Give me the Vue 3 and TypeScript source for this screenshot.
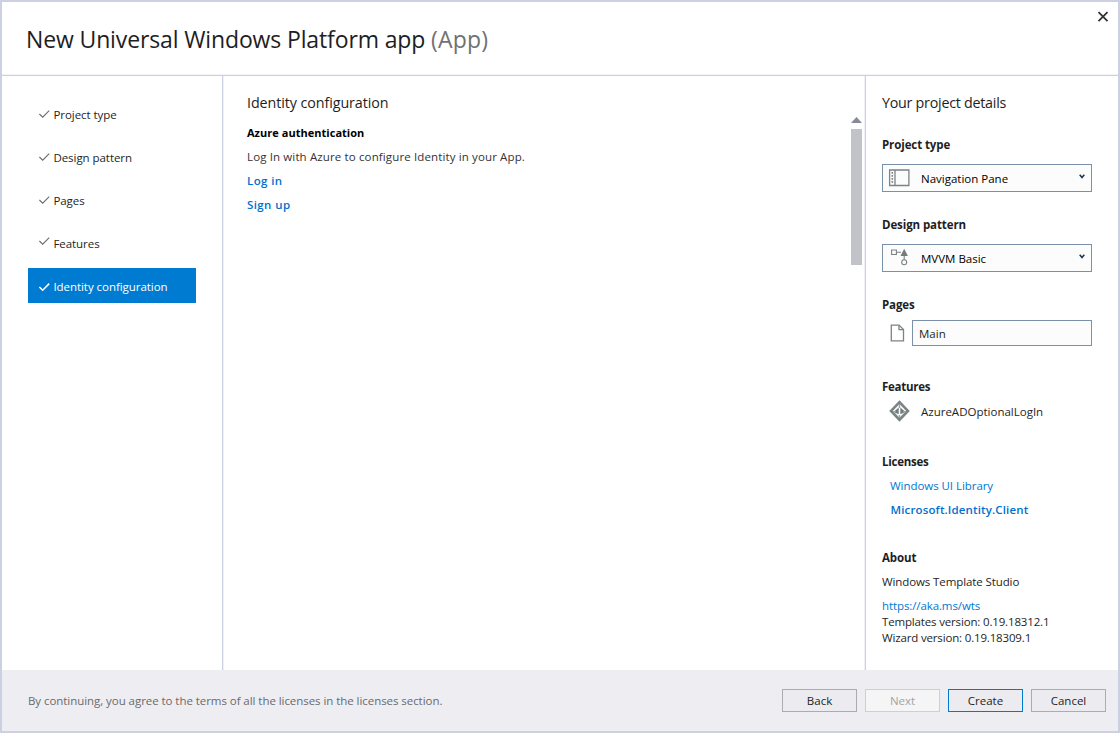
<script setup lang="ts">
interface Step {
  label: string
  state: 'done' | 'raised' | 'current'
}

const steps: Step[] = [
  { label: 'Project type', state: 'done' },
  { label: 'Design pattern', state: 'done' },
  { label: 'Pages', state: 'done' },
  { label: 'Features', state: 'raised' },
  { label: 'Identity configuration', state: 'current' },
]
</script>

<template>
  <div class="window">
    <header class="titlebar">
      <h1 class="title">New Universal Windows Platform app <span class="muted">(App)</span></h1>
      <button class="close" aria-label="Close">
        <svg width="12" height="12" viewBox="0 0 12 12"><path d="M1.5 1.2 10.5 10.2M10.5 1.2 1.5 10.2" /></svg>
      </button>
    </header>

    <div class="body">
      <nav class="steps">
        <a v-for="s in steps" :key="s.label" class="step" :class="s.state">
          <svg class="check" width="12" height="10" viewBox="0 0 12 10"><path d="M1.4 5 4.7 8.2 11.2 1.6" /></svg>
          <span>{{ s.label }}</span>
        </a>
      </nav>

      <main class="content">
        <div class="identity">
          <h2 class="heading">Identity configuration</h2>
          <div class="line sub">Azure authentication</div>
          <div class="line desc">Log In with Azure to configure Identity in your App.</div>
          <a class="line link strong action">Log in</a>
          <a class="line link strong action">Sign up</a>
        </div>
        <div class="scrollbar">
          <svg width="11" height="6" viewBox="0 0 11 6"><path d="M5.5 0 11 6H0Z" /></svg>
          <div class="thumb"></div>
        </div>
      </main>

      <aside class="details">
        <h2 class="heading details-heading">Your project details</h2>

        <div class="line label">Project type</div>
        <div class="combo">
          <svg class="combo-icon" width="22" height="20" viewBox="0 0 22 20">
            <path class="stroke" d="M1.6 2H20.9V17.5H1.6ZM7 2V17.5" />
            <path class="dots" d="M4.3 4V16" />
          </svg>
          <span class="combo-text">Navigation Pane</span>
          <svg class="arrow" width="6" height="5" viewBox="0 0 6 5"><path d="M.7 .7 3 3.5 5.3 .7" /></svg>
        </div>

        <div class="line label second">Design pattern</div>
        <div class="combo">
          <svg class="combo-icon" width="22" height="20" viewBox="0 0 22 20">
            <path class="stroke thin" d="M3.6 2H8.4V6.5H3.6ZM8.4 4.2H13M16.2 8V12" />
            <path class="fill" d="M16.2 .8 19.9 8H12.5Z" />
            <circle class="stroke thin" cx="16.2" cy="14.2" r="2.5" />
          </svg>
          <span class="combo-text">MVVM Basic</span>
          <svg class="arrow" width="6" height="5" viewBox="0 0 6 5"><path d="M.7 .7 3 3.5 5.3 .7" /></svg>
        </div>

        <div class="line label second">Pages</div>
        <div class="page-row">
          <svg width="15" height="18" viewBox="0 0 15 18">
            <path class="stroke" d="M1.3 1.1H9L13.5 5.6V16.8H1.3Z" />
            <path class="stroke" d="M9 1.1V5.6H13.5" />
          </svg>
          <div class="page-name">Main</div>
        </div>

        <div class="line label features">Features</div>
        <div class="feature-row">
          <svg width="21" height="22" viewBox="0 0 21 22">
            <path class="frame" d="M10.5 2.1 18.9 10.9 10.5 19.7 2.1 10.9Z" />
            <path class="fill" d="M9.7 7.6V14.2L6.2 12.8 5.6 10.9ZM11.3 7.6V14.2L14.8 12.8 15.4 10.9Z" />
            <path class="mesh" d="M10.5 4V8M4.5 11.8H7M14 11.8H16.5M10.5 15V18" />
          </svg>
          <span class="feature-name">AzureADOptionalLogIn</span>
        </div>

        <div class="line label licenses">Licenses</div>
        <a class="line link license">Windows UI Library</a>
        <a class="line link license strong identity-client">Microsoft.Identity.Client</a>

        <div class="line label about">About</div>
        <div class="line studio">Windows Template Studio</div>
        <a class="line link site">https://aka.ms/wts</a>
        <div class="line version">Templates version: 0.19.18312.1</div>
        <div class="line version">Wizard version: 0.19.18309.1</div>
      </aside>
    </div>

    <footer class="footer">
      <span class="notice">By continuing, you agree to the terms of all the licenses in the licenses section.</span>
      <button class="btn">Back</button>
      <button class="btn disabled" disabled>Next</button>
      <button class="btn primary">Create</button>
      <button class="btn">Cancel</button>
    </footer>
  </div>
</template>

<style>
body {
  margin: 0;
}
</style>

<style scoped>
.window {
  box-sizing: border-box;
  width: 1120px;
  height: 733px;
  border: 2px solid #ccd0e2;
  display: flex;
  flex-direction: column;
  background: #fff;
  color: #1e1e1e;
  font-family: "Open Sans", "Noto Sans", sans-serif;
  font-size: 11.5px;
  line-height: 16px;
  overflow: hidden;
}
.window * {
  box-sizing: border-box;
}
svg {
  display: block;
  flex: none;
  fill: none;
}
button {
  font: inherit;
  color: inherit;
  padding: 0;
}
.titlebar {
  flex: none;
  height: 74px;
  border-bottom: 1px solid #ccd0e2;
  box-shadow: inset 0 -1px #f2f3f8;
  display: flex;
  justify-content: space-between;
}
.title {
  margin: 21px 0 0 24px;
  font-size: 23px;
  line-height: 32px;
  font-weight: 400;
  letter-spacing: -0.13px;
  white-space: nowrap;
}
.muted {
  color: #717171;
  letter-spacing: 0.15px;
}
.close {
  width: 12px;
  height: 12px;
  margin: 9px 9px 0 0;
  border: 0;
  background: none;
}
.close path {
  stroke: #333;
  stroke-width: 1.8;
}
.body {
  flex: 1;
  min-height: 0;
  display: flex;
}
.steps {
  width: 221px;
  border-right: 1px solid #ccd0e2;
  box-shadow: 1px 0 #f0f1f7;
  padding: 20px 26px 0;
  display: flex;
  flex-direction: column;
  gap: 8px;
}
.step {
  height: 35px;
  padding: 2px 0 0 10px;
  display: flex;
  align-items: center;
  gap: 3.4px;
  letter-spacing: -0.05px;
  white-space: nowrap;
}
.check {
  margin-top: -2px;
}
.check path {
  stroke: #6b6b6b;
  stroke-width: 1.1;
}
.raised .check {
  margin-top: -6px;
}
.current {
  background: #007bd2;
  color: #fff;
}
.current .check {
  margin-top: 0;
}
.current .check path {
  stroke: #fff;
  stroke-width: 1.6;
}
.content {
  flex: 1;
  border-right: 1px solid #ccd0e2;
  box-shadow: inset -1px 0 #f0f1f7;
  display: flex;
  justify-content: space-between;
}
.identity {
  padding: 17px 0 0 24px;
  display: flex;
  flex-direction: column;
  gap: 8px;
}
.heading {
  margin: 0;
  font-size: 14.3px;
  line-height: 20px;
  font-weight: 400;
  letter-spacing: -0.08px;
}
.details-heading {
  letter-spacing: -0.26px;
}
.line {
  display: block;
  white-space: nowrap;
}
.sub {
  margin-top: 4px;
  font-weight: 700;
  font-size: 11px;
  letter-spacing: 0.03px;
  color: #000;
}
.desc {
  color: #333;
  letter-spacing: 0.13px;
}
.link {
  color: #0078cf;
}
.strong {
  font-weight: 600;
  color: #0070d0;
}
.action {
  letter-spacing: 0.4px;
}
.scrollbar {
  width: 14px;
  padding: 41px 0 0;
}
.scrollbar path {
  fill: #868999;
}
.thumb {
  width: 11px;
  height: 136px;
  margin-top: 6px;
  background: #c2c3c9;
}
.details {
  width: 252px;
  padding: 17px 26px 0 16px;
}
.label {
  font-weight: 700;
  margin-top: 24px;
  letter-spacing: -0.1px;
}
.label.second {
  margin-top: 25px;
}
.combo {
  height: 28px;
  margin-top: 11px;
  border: 1px solid #7b91a9;
  background: #fcfcfc;
  color: #000;
  display: flex;
  align-items: center;
  padding: 0 6px 0 5px;
}
.combo-icon {
  margin-top: -1px;
}
.combo-text {
  flex: 1;
  margin: 1px 0 0 11px;
}
.arrow {
  margin-top: -3px;
}
.arrow path {
  stroke: #1f3a56;
  stroke-width: 1.6;
}
.stroke {
  stroke: #7b8385;
  stroke-width: 1.3;
}
.thin {
  stroke-width: 1.1;
}
.fill {
  fill: #747c7e;
}
.dots {
  stroke: #7b8385;
  stroke-width: 1.6;
  stroke-dasharray: 1.7 1.3;
}
.frame {
  stroke: #7b8385;
  stroke-width: 2.7;
}
.mesh {
  stroke: #9aa0a2;
  stroke-width: 1.4;
}
.page-row {
  margin-top: 7px;
  height: 26px;
  display: flex;
  align-items: center;
  padding-left: 8px;
  gap: 7px;
}
.page-name {
  flex: 1;
  height: 26px;
  border: 1px solid #7b91a9;
  background: #fcfcfc;
  padding: 5px 6px 0;
}
.label.features {
  margin-top: 33px;
  letter-spacing: -0.25px;
}
.feature-row {
  margin-top: 5px;
  height: 24px;
  padding-left: 7px;
  display: flex;
  gap: 11px;
}
.feature-name {
  margin-top: 4px;
}
.label.licenses {
  margin-top: 30px;
  letter-spacing: -0.25px;
}
.license {
  margin: 8px 0 0 8px;
  letter-spacing: -0.05px;
}
.identity-client {
  margin-left: 8.5px;
  letter-spacing: 0.14px;
}
.label.about {
  margin-top: 32px;
}
.studio,
.site {
  margin-top: 8px;
  letter-spacing: -0.1px;
}
.version {
  letter-spacing: -0.16px;
}
.footer {
  flex: none;
  height: 61px;
  background: #eeeef2;
  display: flex;
  align-items: center;
  gap: 8px;
  padding: 0 12px 0 26px;
}
.notice {
  flex: 1;
  color: #6a6a6c;
  letter-spacing: -0.055px;
  white-space: nowrap;
}
.btn {
  width: 75px;
  height: 23px;
  border: 1px solid #acacac;
  background: #ececf0;
  border-radius: 0;
}
.btn.disabled {
  border-color: #cccedb;
  background: #f5f5f5;
  color: #a2a4a5;
}
.btn.primary {
  border-color: #007acc;
}
</style>
